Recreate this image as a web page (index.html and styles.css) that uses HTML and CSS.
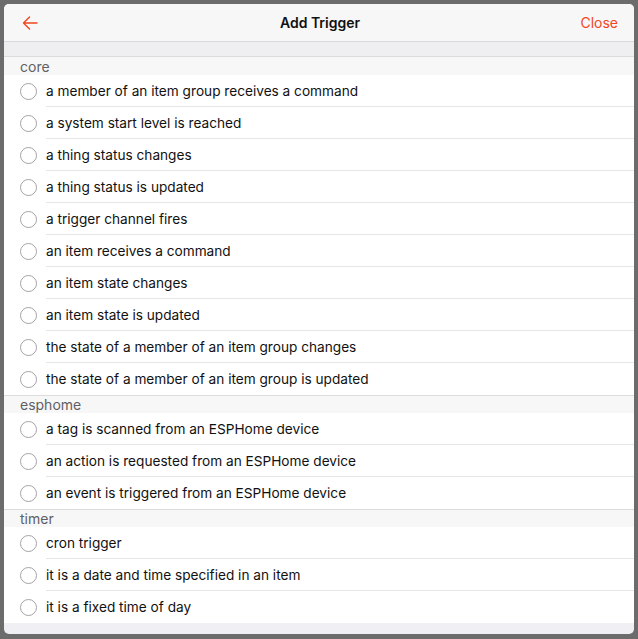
FILE: index.html
```html
<!DOCTYPE html>
<html>
<head>
<meta charset="utf-8">
<link rel="stylesheet" href="styles.css">
</head>
<body>
<div class="modal">
  <div class="navbar">
    <a class="back"><svg width="16" height="14" viewBox="0 0 16 14"><path d="M15 7H1.5M7.5 1L1.5 7l6 6" fill="none" stroke="currentColor" stroke-width="1.4" stroke-linecap="round" stroke-linejoin="round"/></svg></a>
    <div class="title">Add Trigger</div>
    <a class="close">Close</a>
  </div>
  <div class="strip"></div>
  <div class="content">
    <div class="group">
      <div class="group-title">core</div>
      <div class="row"><span class="radio"></span><span class="label">a member of an item group receives a command</span></div>
      <div class="row"><span class="radio"></span><span class="label">a system start level is reached</span></div>
      <div class="row"><span class="radio"></span><span class="label">a thing status changes</span></div>
      <div class="row"><span class="radio"></span><span class="label">a thing status is updated</span></div>
      <div class="row"><span class="radio"></span><span class="label">a trigger channel fires</span></div>
      <div class="row"><span class="radio"></span><span class="label">an item receives a command</span></div>
      <div class="row"><span class="radio"></span><span class="label">an item state changes</span></div>
      <div class="row"><span class="radio"></span><span class="label">an item state is updated</span></div>
      <div class="row"><span class="radio"></span><span class="label">the state of a member of an item group changes</span></div>
      <div class="row"><span class="radio"></span><span class="label">the state of a member of an item group is updated</span></div>
    </div>
    <div class="group">
      <div class="group-title">esphome</div>
      <div class="row"><span class="radio"></span><span class="label">a tag is scanned from an ESPHome device</span></div>
      <div class="row"><span class="radio"></span><span class="label">an action is requested from an ESPHome device</span></div>
      <div class="row"><span class="radio"></span><span class="label">an event is triggered from an ESPHome device</span></div>
    </div>
    <div class="group">
      <div class="group-title">timer</div>
      <div class="row"><span class="radio"></span><span class="label">cron trigger</span></div>
      <div class="row"><span class="radio"></span><span class="label">it is a date and time specified in an item</span></div>
      <div class="row"><span class="radio"></span><span class="label">it is a fixed time of day</span></div>
    </div>
  </div>
</div>
</body>
</html>
```
FILE: styles.css
```css
html, body {
  margin: 0;
  padding: 0;
  height: 100%;
}
body {
  background: #6c6c6c;
  padding: 4px 4px 0 4px;
  box-sizing: border-box;
  font-family: Inter, "Liberation Sans", Arial, sans-serif;
  color: #000;
}
.modal {
  width: 630px;
  height: 630px;
  background: #efeff4;
  border-radius: 5px;
  overflow: hidden;
  display: flex;
  flex-direction: column;
}
.navbar {
  height: 37px;
  flex: none;
  background: #f7f7f8;
  border-bottom: 1px solid #d9d9dc;
  display: flex;
  align-items: center;
  justify-content: space-between;
  padding: 0 16px 0 18px;
}
.back {
  color: #f2461d;
  display: flex;
  align-items: center;
  width: 60px;
}
.title {
  font-weight: 600;
  font-size: 14px;
  color: #111;
}
.close {
  color: #f2461d;
  font-size: 14px;
  width: 60px;
  text-align: right;
}
.strip {
  height: 14px;
  flex: none;
  background: #efeff2;
}
.content {
  flex: 1;
}
.group-title {
  height: 18px;
  background: #f7f7f7;
  border-top: 1px solid #dcdcdf;
  box-sizing: border-box;
  padding-left: 16px;
  font-size: 14px;
  line-height: 17px;
  color: #5f5f64;
}
.group:first-child .group-title {
  height: 19px;
  line-height: 19px;
}
.row {
  height: 32px;
  background: #fff;
  display: flex;
  align-items: center;
  padding-left: 16px;
}
.radio {
  width: 15px;
  height: 15px;
  border: 1px solid #a4a4a9;
  border-radius: 50%;
  flex: none;
  margin-right: 9px;
}
.label {
  flex: 1;
  height: 32px;
  line-height: 32px;
  font-size: 13.65px;
  color: #111;
  border-bottom: 1px solid #e6e6e8;
  box-sizing: border-box;
}
.row:last-child .label {
  border-bottom: none;
}
```
